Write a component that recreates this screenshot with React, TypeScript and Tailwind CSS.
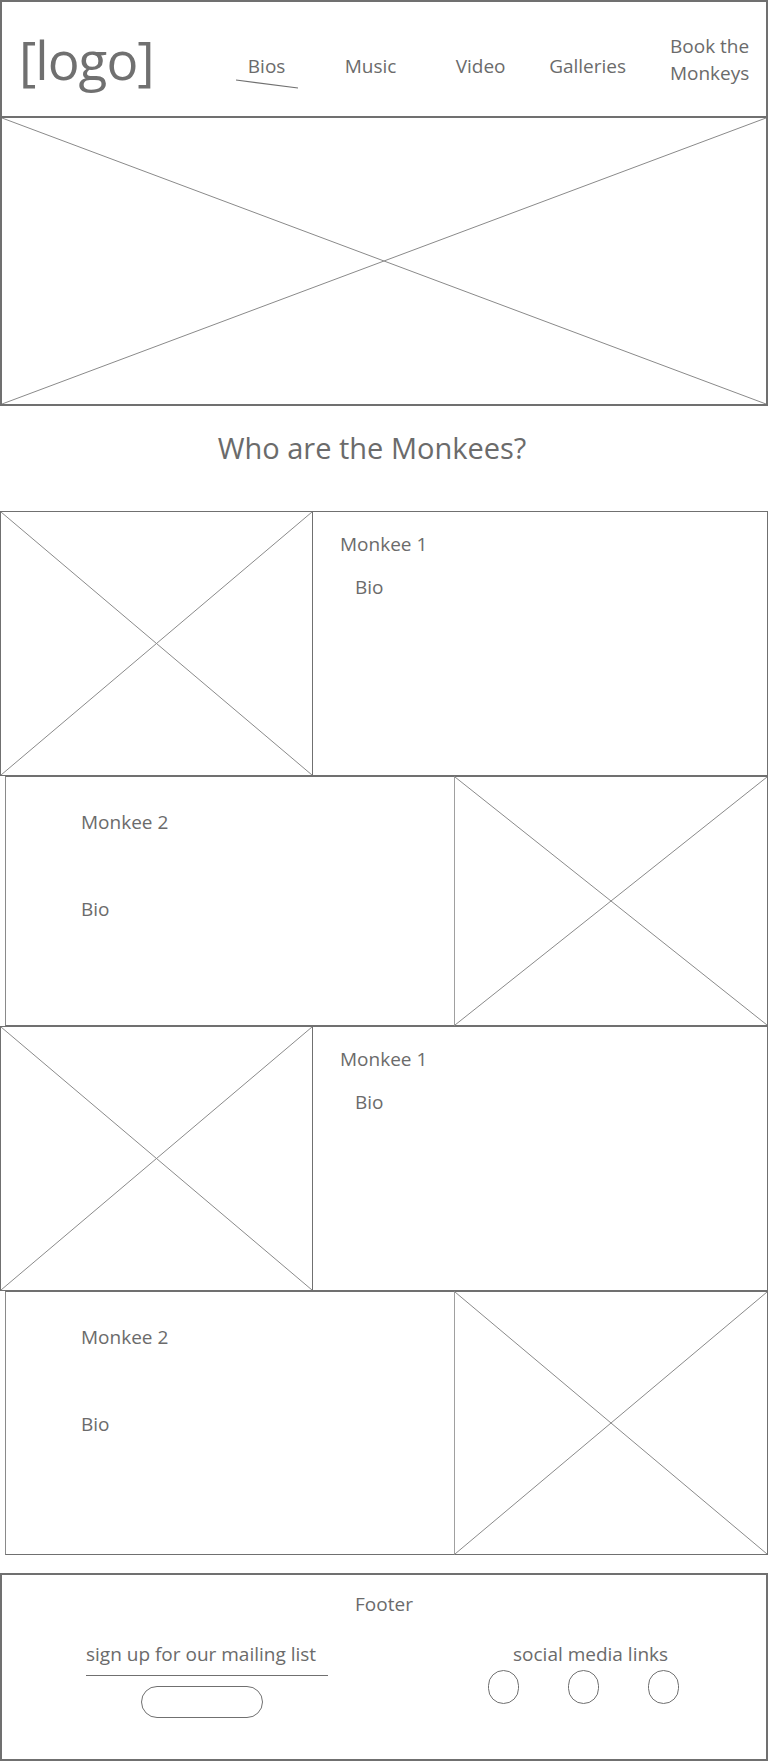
const line = 'border-[#707070]';

function Placeholder({ className = '' }: { className?: string }) {
  return (
    <div className={`relative ${className}`}>
      <svg className="absolute inset-0 h-full w-full" preserveAspectRatio="none" viewBox="0 0 100 100">
        <line x1="0" y1="0" x2="100" y2="100" stroke="#8a8a8a" strokeWidth="1" vectorEffect="non-scaling-stroke" />
        <line x1="100" y1="0" x2="0" y2="100" stroke="#8a8a8a" strokeWidth="1" vectorEffect="non-scaling-stroke" />
      </svg>
    </div>
  );
}

function BioLeft() {
  return (
    <div className={`flex h-[265px] border-[1.5px] ${line}`}>
      <Placeholder className={`w-[312px] shrink-0 border-r ${line}`} />
      <div className="pl-[27px] pt-[19px]">
        <p className="text-[19px] leading-[26px]">Monkee 1</p>
        <p className="mt-[17px] pl-[15px] text-[19px] leading-[26px]">Bio</p>
      </div>
    </div>
  );
}

function BioRight({ height }: { height: string }) {
  return (
    <div className={`flex ${height}`}>
      <div className={`ml-[5px] w-[449px] shrink-0 border-[1.5px] border-r-0 border-[#8a8a8a] border-t-[#707070] border-b-[#707070] pl-[75px] pt-[32px]`}>
        <p className="text-[19px] leading-[26px]">Monkee 2</p>
        <p className="mt-[61px] text-[19px] leading-[26px]">Bio</p>
      </div>
      <Placeholder className={`flex-1 border-[1.5px] border-l-[#a0a0a0] ${line}`} />
    </div>
  );
}

export default function App() {
  return (
    <div className="min-h-screen bg-white text-[#6b6b6b]" style={{ fontFamily: '"Open Sans", "Noto Sans", sans-serif' }}>
      {/* Header */}
      <header className={`flex h-[118px] items-center border-2 ${line}`}>
        <div className="ml-[17px] text-[53px] leading-none tracking-[-1px] text-[#707070]">[logo]</div>
        <nav className="ml-[63px] mt-[2px] flex items-center text-[19px]">
          <div className="relative mt-[12px] w-[100px] text-center">
            Bios
            <svg className="absolute left-[18px] top-[27px]" width="64" height="12" viewBox="0 0 64 12">
              <line x1="1" y1="1" x2="63" y2="9" stroke="#707070" strokeWidth="1.2" />
            </svg>
          </div>
          <div className="ml-[4px] mt-[12px] w-[100px] text-center">Music</div>
          <div className="ml-[10px] mt-[12px] w-[100px] text-center">Video</div>
          <div className="ml-[7px] mt-[12px] w-[100px] text-center">Galleries</div>
          <div className="ml-[22px] w-[100px] text-center leading-[27px]">
            Book the
            <br />
            Monkeys
          </div>
        </nav>
      </header>

      {/* Hero */}
      <Placeholder className={`h-[288px] border-x-2 border-b-2 ${line}`} />

      {/* Heading */}
      <div className="flex h-[105px] items-start justify-center pt-[22px]">
        <h1 className="pr-[24px] text-[29px] leading-[40px]">Who are the Monkees?</h1>
      </div>

      {/* Bios */}
      <BioLeft />
      <BioRight height="h-[250px]" />
      <BioLeft />
      <BioRight height="h-[264px]" />

      {/* Footer */}
      <footer className={`mt-[18px] h-[188px] border-2 ${line} pt-[16px]`}>
        <p className="text-center text-[19px] leading-[26px]">Footer</p>
        <div className="mt-[24px] flex">
          <div className="ml-[84px] flex w-[242px] flex-col">
            <p className="text-[19px] leading-[26px]">sign up for our mailing list</p>
            <div className={`mt-[8px] border-t ${line}`} />
            <div className={`ml-[55px] mt-[10px] h-[32px] w-[122px] rounded-full border ${line}`} />
          </div>
          <div className="ml-[160px] flex flex-col">
            <p className="ml-[25px] text-[19px] leading-[26px]">social media links</p>
            <div className="mt-[3px] flex gap-[49px]">
              <div className={`h-[34px] w-[31px] rounded-full border ${line}`} />
              <div className={`h-[34px] w-[31px] rounded-full border ${line}`} />
              <div className={`h-[34px] w-[31px] rounded-full border ${line}`} />
            </div>
          </div>
        </div>
      </footer>
    </div>
  );
}
